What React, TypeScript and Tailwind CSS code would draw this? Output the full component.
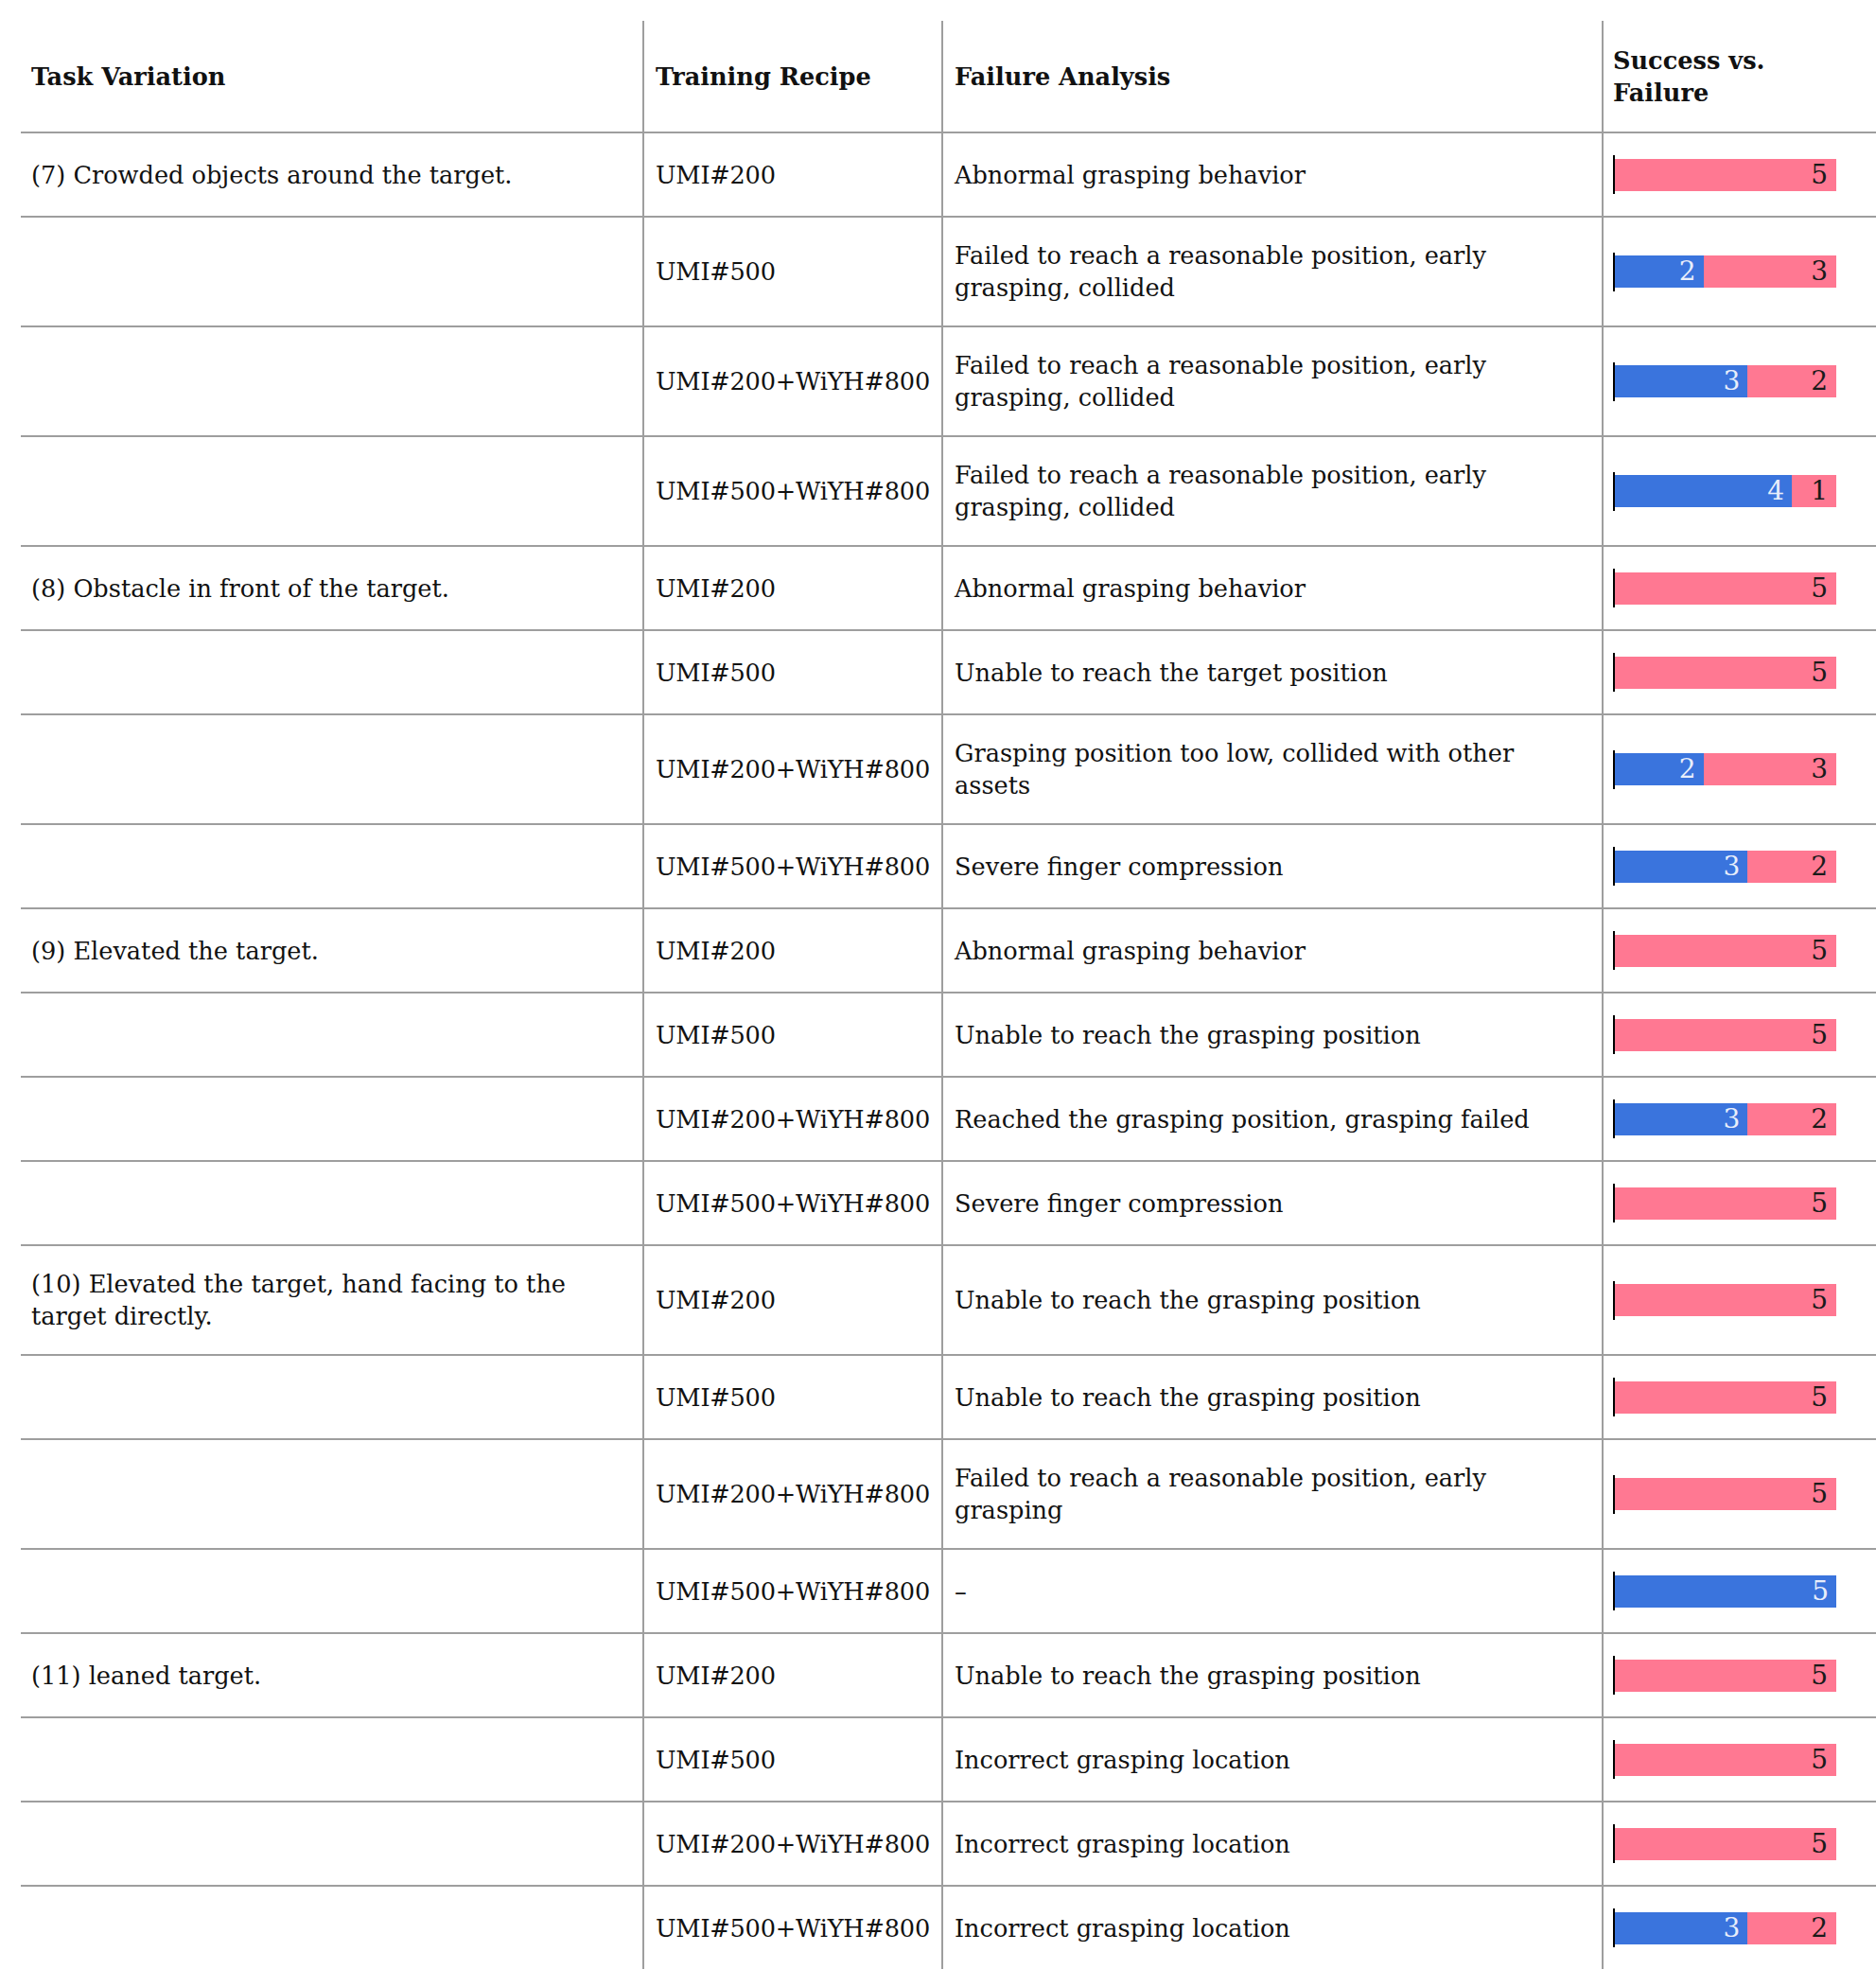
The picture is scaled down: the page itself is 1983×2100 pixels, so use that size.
import React from 'react'

type Row = {
  task?: string[]
  recipe: string
  analysis: string[]
  ok: number
  fail: number
}

const rows: Row[] = [
  { task: ['(7) Crowded objects around the target.'], recipe: 'UMI#200', analysis: ['Abnormal grasping behavior'], ok: 0, fail: 5 },
  { recipe: 'UMI#500', analysis: ['Failed to reach a reasonable position, early', 'grasping, collided'], ok: 2, fail: 3 },
  { recipe: 'UMI#200+WiYH#800', analysis: ['Failed to reach a reasonable position, early', 'grasping, collided'], ok: 3, fail: 2 },
  { recipe: 'UMI#500+WiYH#800', analysis: ['Failed to reach a reasonable position, early', 'grasping, collided'], ok: 4, fail: 1 },
  { task: ['(8) Obstacle in front of the target.'], recipe: 'UMI#200', analysis: ['Abnormal grasping behavior'], ok: 0, fail: 5 },
  { recipe: 'UMI#500', analysis: ['Unable to reach the target position'], ok: 0, fail: 5 },
  { recipe: 'UMI#200+WiYH#800', analysis: ['Grasping position too low, collided with other', 'assets'], ok: 2, fail: 3 },
  { recipe: 'UMI#500+WiYH#800', analysis: ['Severe finger compression'], ok: 3, fail: 2 },
  { task: ['(9) Elevated the target.'], recipe: 'UMI#200', analysis: ['Abnormal grasping behavior'], ok: 0, fail: 5 },
  { recipe: 'UMI#500', analysis: ['Unable to reach the grasping position'], ok: 0, fail: 5 },
  { recipe: 'UMI#200+WiYH#800', analysis: ['Reached the grasping position, grasping failed'], ok: 3, fail: 2 },
  { recipe: 'UMI#500+WiYH#800', analysis: ['Severe finger compression'], ok: 0, fail: 5 },
  { task: ['(10) Elevated the target, hand facing to the', 'target directly.'], recipe: 'UMI#200', analysis: ['Unable to reach the grasping position'], ok: 0, fail: 5 },
  { recipe: 'UMI#500', analysis: ['Unable to reach the grasping position'], ok: 0, fail: 5 },
  { recipe: 'UMI#200+WiYH#800', analysis: ['Failed to reach a reasonable position, early', 'grasping'], ok: 0, fail: 5 },
  { recipe: 'UMI#500+WiYH#800', analysis: ['–'], ok: 5, fail: 0 },
  { task: ['(11) leaned target.'], recipe: 'UMI#200', analysis: ['Unable to reach the grasping position'], ok: 0, fail: 5 },
  { recipe: 'UMI#500', analysis: ['Incorrect grasping location'], ok: 0, fail: 5 },
  { recipe: 'UMI#200+WiYH#800', analysis: ['Incorrect grasping location'], ok: 0, fail: 5 },
  { recipe: 'UMI#500+WiYH#800', analysis: ['Incorrect grasping location'], ok: 3, fail: 2 },
]

function Lines({ lines }: { lines: string[] }) {
  return (
    <div>
      {lines.map((l, i) => (
        <div key={i} className="whitespace-nowrap">{l}</div>
      ))}
    </div>
  )
}

function Bar({ ok, fail }: { ok: number; fail: number }) {
  const total = ok + fail
  return (
    <div className="flex h-[41px] items-center border-l-2 border-black text-[28px]">
      <div className="flex h-[34px] w-[234px]">
        {ok > 0 && (
          <div
            className="flex items-center justify-end bg-[#3a74dd] pr-[8px] text-[#e8eefb]"
            style={{ width: `${(ok / total) * 100}%` }}
          >
            {ok}
          </div>
        )}
        {fail > 0 && (
          <div
            className="flex items-center justify-end bg-[#ff7892] pr-[9px] text-[#1a1a1a]"
            style={{ width: `${(fail / total) * 100}%` }}
          >
            {fail}
          </div>
        )}
      </div>
    </div>
  )
}

export default function App() {
  const last = rows.length - 1
  return (
    <div className="min-h-[2100px] bg-white pl-[22px] pt-[22px] font-['DejaVu_Serif',serif] text-[25.6px] leading-[34px] text-[#111]">
      <div className="grid grid-cols-[657px_316px_698px_1fr]">
        <div className="flex items-center border-b-2 border-[#9e9e9e] pb-[24px] pl-[11px] pt-[25px] font-bold">Task Variation</div>
        <div className="flex items-center border-b-2 border-l-2 border-[#9e9e9e] pb-[24px] pl-3 pt-[25px] font-bold">Training Recipe</div>
        <div className="flex items-center border-b-2 border-l-2 border-[#9e9e9e] pb-[24px] pl-3 pt-[25px] font-bold">Failure Analysis</div>
        <div className="flex items-center border-b-2 border-l-2 border-[#9e9e9e] pb-[24px] pl-[10px] pt-[25px] font-bold">
          <Lines lines={['Success vs.', 'Failure']} />
        </div>
        {rows.map((r, i) => {
          const b = i === last ? 'border-[#9e9e9e]' : 'border-b-2 border-[#9e9e9e]'
          return (
            <React.Fragment key={i}>
              <div className={`flex items-center py-[23px] pl-[11px] ${b}`}>
                {r.task && <Lines lines={r.task} />}
              </div>
              <div className={`flex items-center border-l-2 py-[23px] pl-3 ${b}`}>
                <span className="whitespace-nowrap tracking-[-0.2px]">{r.recipe}</span>
              </div>
              <div className={`flex items-center border-l-2 py-[23px] pl-3 ${b}`}>
                <Lines lines={r.analysis} />
              </div>
              <div className={`flex items-center border-l-2 py-[23px] pl-[10px] ${b}`}>
                <Bar ok={r.ok} fail={r.fail} />
              </div>
            </React.Fragment>
          )
        })}
      </div>
    </div>
  )
}
